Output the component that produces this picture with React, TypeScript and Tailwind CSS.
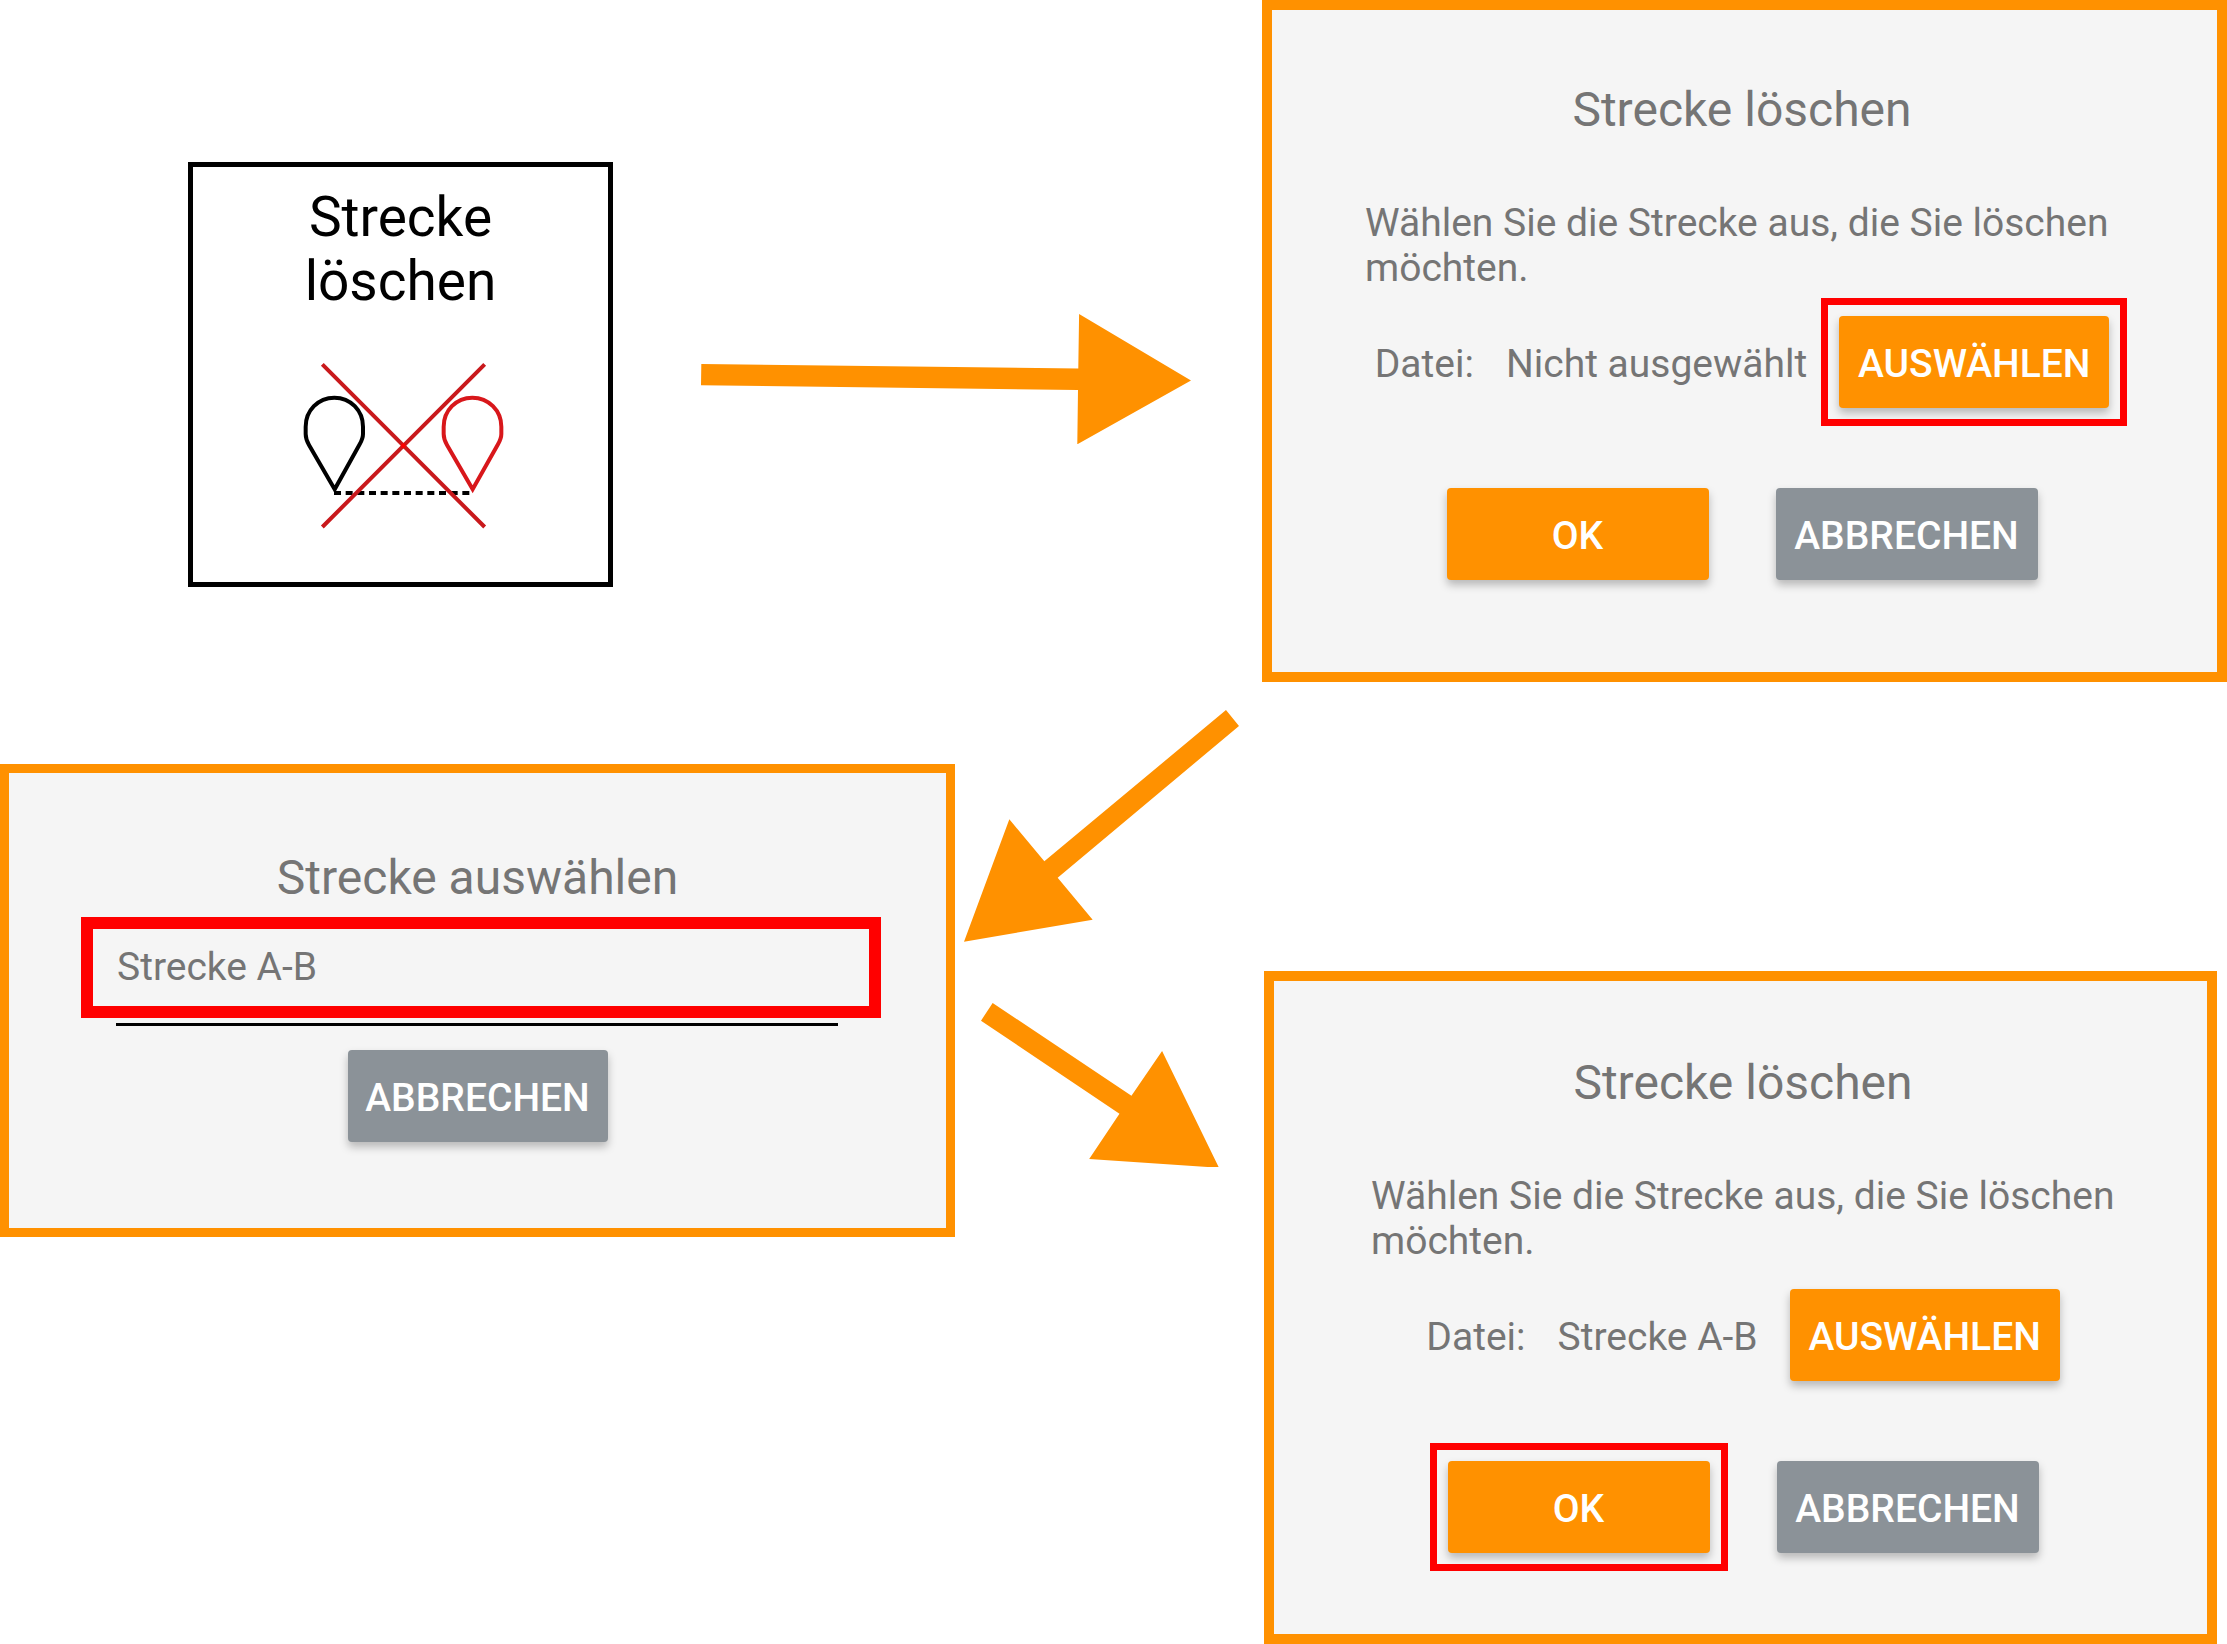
import type { ReactNode } from "react";

function Arrow({ viewBox, points, className }: { viewBox: string; points: string; className: string }) {
  return (
    <svg viewBox={viewBox} className={className} fill="#ff9100" aria-hidden="true">
      <polygon points={points} />
    </svg>
  );
}

function RouteIcon() {
  return (
    <svg viewBox="378 636 630 504" className="mt-[49px] w-[210px]" fill="none" strokeWidth="12" aria-hidden="true">
      <path
        stroke="#000"
        d="M494 1018 L417 885 Q407 867 407 852 V830 C407 782 444 743 493 743 C542 743 579 782 579 830 V852 Q579 865 569 883 Z"
      />
      <path stroke="#000" strokeDasharray="21 14" d="M492 1029 H898" />
      <path
        stroke="#d8171b"
        d="M908 1018 L831 885 Q821 867 821 852 V830 C821 782 858 743 907 743 C956 743 994 782 994 830 V852 Q994 865 984 883 Z"
      />
      <path stroke="#c9191c" d="M457 643 L944 1131 M944 643 L457 1131" />
      <circle cx="700" cy="887" r="7" fill="#f00" />
    </svg>
  );
}

function Highlight() {
  return <span className="pointer-events-none absolute -inset-[18px] border-[7px] border-[#ff0000]" />;
}

function DialogButton({
  children,
  tone,
  className,
  marked = false,
}: {
  children: ReactNode;
  tone: "primary" | "neutral";
  className: string;
  marked?: boolean;
}) {
  return (
    <div className="relative">
      <button
        type="button"
        className={`${className} ${
          tone === "primary" ? "bg-[#ff9100]" : "bg-[#8b9298]"
        } h-[92px] rounded-[4px] pt-1 text-[39px] font-medium text-white shadow-[0_5px_8px_rgba(0,0,0,0.25)]`}
      >
        {children}
      </button>
      {marked && <Highlight />}
    </div>
  );
}

function DeleteDialog({ file, marked, className }: { file: string; marked: "select" | "ok"; className: string }) {
  return (
    <section className={`border-[10px] border-[#ff9100] bg-[#f5f5f5] text-[39px] leading-[45px] text-[#757575] ${className}`}>
      <h2 className="text-center text-[48px] leading-[56px]">Strecke löschen</h2>
      <p className="mt-[63px]">Wählen Sie die Strecke aus, die Sie löschen möchten.</p>
      <div className="mt-[25px] flex items-center justify-center gap-8">
        <span className="pt-1">Datei:</span>
        <span className="pt-1">{file}</span>
        <DialogButton tone="primary" className="w-[270px]" marked={marked === "select"}>
          AUSWÄHLEN
        </DialogButton>
      </div>
      <div className="mt-20 flex justify-center gap-[67px]">
        <DialogButton tone="primary" className="w-[262px]" marked={marked === "ok"}>
          OK
        </DialogButton>
        <DialogButton tone="neutral" className="w-[262px]">
          ABBRECHEN
        </DialogButton>
      </div>
    </section>
  );
}

export default function App() {
  return (
    <main className="min-h-screen bg-white font-['Roboto',sans-serif]">
      <div className="grid grid-cols-[1262fr_965fr] items-start">
        <div className="flex items-start gap-[88px] pt-[162px] pr-[71px] pl-[188px]">
          <button
            type="button"
            className="flex h-[425px] w-[425px] shrink-0 flex-col items-center border-5 border-black bg-white pt-[18px] text-[55px] leading-[64px] text-black"
          >
            <span>Strecke</span>
            <span>löschen</span>
            <RouteIcon />
          </button>
          <Arrow
            viewBox="20.7 23.7 490 130.3"
            points="21,73.7 398,78.3 398.8,23.7 510.7,90.3 397,154 397.7,99.7 20.7,95"
            className="mt-[152px] min-w-0 flex-1"
          />
        </div>
        <DeleteDialog file="Nicht ausgewählt" marked="select" className="pt-[72px] pr-[98px] pb-[92px] pl-[93px]" />
      </div>

      <div className="grid grid-cols-[955fr_309fr_953fr_10fr] items-start">
        <section className="mt-[82px] flex flex-col border-[9px] border-[#ff9100] bg-[#f5f5f5] pt-[77px] pb-[86px] text-[39px] text-[#757575]">
          <h2 className="text-center text-[48px] leading-[56px]">Strecke auswählen</h2>
          <div className="mt-[11px] mr-[65px] ml-[72px]">
            <button type="button" className="block h-[101px] w-full border-[12px] border-[#ff0000] px-6 text-left">
              Strecke A-B
            </button>
            <hr className="mt-[5px] mr-[43px] ml-[35px] border-t-[3px] border-black" />
          </div>
          <div className="mt-6 flex justify-center">
            <DialogButton tone="neutral" className="w-[260px]">
              ABBRECHEN
            </DialogButton>
          </div>
        </section>
        <div className="flex flex-col items-start gap-[61px] pt-[28px] pl-[9px]">
          <Arrow
            viewBox="42 59 825 695"
            points="828,59 867,107 323,562 428,688 42,754 178,387 283,513"
            className="w-[275px]"
          />
          <Arrow
            viewBox="94 936 715 495"
            points="129,936 546,1215 638,1080 809,1431 419,1405 510,1269 94,989"
            className="ml-[17px] w-[238px]"
          />
        </div>
        <DeleteDialog file="Strecke A-B" marked="ok" className="mt-[289px] pt-[74px] pr-[92px] pb-[81px] pl-[97px]" />
      </div>
    </main>
  );
}
